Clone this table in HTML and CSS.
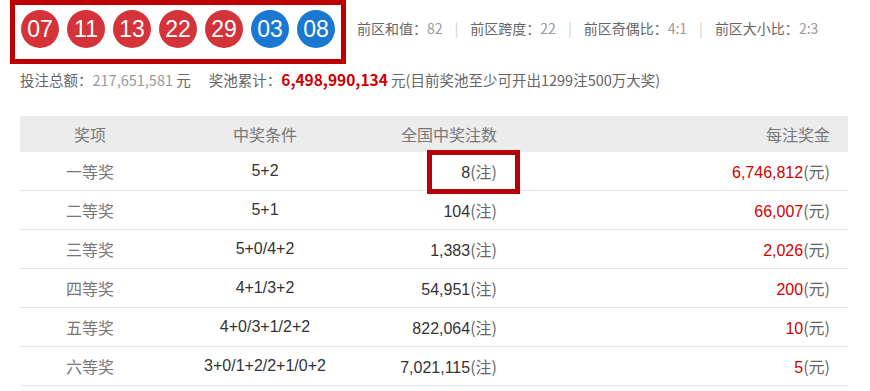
FILE: index.html
```html
<!DOCTYPE html>
<html lang="zh-CN">
<head>
    <meta charset="UTF-8">
    <meta name="viewport" content="width=device-width, initial-scale=1.0">
    <title>开奖详情</title>
    <link rel="stylesheet" href="styles.css">
</head>
<body>
    <div class="top">
        <div class="balls">
            <span class="ball red">07</span>
            <span class="ball red">11</span>
            <span class="ball red">13</span>
            <span class="ball red">22</span>
            <span class="ball red">29</span>
            <span class="ball blue">03</span>
            <span class="ball blue">08</span>
        </div>
        <div class="stats">
            前区和值：<em>82</em><i>|</i>前区跨度：<em>22</em><i>|</i>前区奇偶比：<em>4:1</em><i>|</i>前区大小比：<em>2:3</em>
        </div>
    </div>

    <p class="summary">
        投注总额：<em>217,651,581</em> 元<span class="gap"></span>奖池累计：<strong>6,498,990,134</strong> 元(目前奖池至少可开出1299注500万大奖)
    </p>

    <div class="prize">
        <div class="row head">
            <div class="c1">奖项</div>
            <div class="c2">中奖条件</div>
            <div class="c3">全国中奖注数</div>
            <div class="c4">每注奖金</div>
        </div>
        <div class="row">
            <div class="c1">一等奖</div>
            <div class="c2">5+2</div>
            <div class="c3 mark">8<span>(注)</span><b class="hl"></b></div>
            <div class="c4"><strong>6,746,812</strong><span>(元)</span></div>
        </div>
        <div class="row">
            <div class="c1">二等奖</div>
            <div class="c2">5+1</div>
            <div class="c3">104<span>(注)</span></div>
            <div class="c4"><strong>66,007</strong><span>(元)</span></div>
        </div>
        <div class="row">
            <div class="c1">三等奖</div>
            <div class="c2">5+0/4+2</div>
            <div class="c3">1,383<span>(注)</span></div>
            <div class="c4"><strong>2,026</strong><span>(元)</span></div>
        </div>
        <div class="row">
            <div class="c1">四等奖</div>
            <div class="c2">4+1/3+2</div>
            <div class="c3">54,951<span>(注)</span></div>
            <div class="c4"><strong>200</strong><span>(元)</span></div>
        </div>
        <div class="row">
            <div class="c1">五等奖</div>
            <div class="c2">4+0/3+1/2+2</div>
            <div class="c3">822,064<span>(注)</span></div>
            <div class="c4"><strong>10</strong><span>(元)</span></div>
        </div>
        <div class="row">
            <div class="c1">六等奖</div>
            <div class="c2">3+0/1+2/2+1/0+2</div>
            <div class="c3">7,021,115<span>(注)</span></div>
            <div class="c4"><strong>5</strong><span>(元)</span></div>
        </div>
    </div>
</body>
</html>
```

FILE: styles.css
```css
*{
    margin: 0;
    padding: 0;
}
body{
    font-family: "Liberation Sans", "Noto Sans CJK SC", sans-serif;
    color: #666;
    background: #fff;
}
em, i{
    font-style: normal;
}
.top{
    display: flex;
    align-items: flex-start;
}
.balls{
    display: flex;
    gap: 8px;
    margin-left: 10px;
    padding: 5px 6px 11px 6px;
    border: 5px solid #c00000;
}
.ball{
    width: 38px;
    height: 38px;
    line-height: 38px;
    border-radius: 50%;
    text-align: center;
    color: #fff;
    font-size: 23px;
}
.ball.red{
    background: #d5333a;
}
.ball.blue{
    background: #1a78d2;
}
.stats{
    margin: 18px 0 0 11px;
    font-size: 14px;
    line-height: 20px;
    color: #666;
    font-family: "Noto Sans CJK SC", sans-serif;
}
.stats em{
    color: #999;
}
.stats i{
    color: #ccc;
    margin: 0 12px;
}
.summary{
    margin: 5px 0 0 20px;
    font-size: 14.5px;
    line-height: 20px;
    font-family: "Noto Sans CJK SC", sans-serif;
    color: #666;
}
.summary em{
    color: #999;
}
.summary strong{
    color: #cc0000;
    font-size: 15.5px;
}
.summary .gap{
    display: inline-block;
    width: 18px;
}
.prize{
    width: 828px;
    margin: 26px 0 0 20px;
}
.row{
    display: grid;
    grid-template-columns: 140px 210px 140px 1fr;
    height: 38px;
    line-height: 38px;
    font-size: 16px;
    border-bottom: 1px solid #e8e8e8;
    color: #333;
}
.row.head{
    height: 36px;
    line-height: 36px;
    background: #ececec;
    border-bottom: none;
    color: #777;
}
.c1{
    text-align: center;
    color: #777;
    font-family: "Noto Sans CJK SC", sans-serif;
}
.c2{
    text-align: center;
}
.c3{
    text-align: right;
    padding-right: 13px;
}
.c4{
    text-align: right;
    padding-right: 18px;
}
.head div{
    font-family: "Noto Sans CJK SC", sans-serif;
    color: #777;
}
.row span{
    color: #666;
    font-family: "Noto Sans CJK SC", sans-serif;
}
.row strong{
    font-weight: normal;
    color: #d40000;
}
.mark{
    position: relative;
}
.hl{
    position: absolute;
    left: 57px;
    top: -2px;
    width: 83px;
    height: 34px;
    border: 5px solid #b8000b;
}
```
